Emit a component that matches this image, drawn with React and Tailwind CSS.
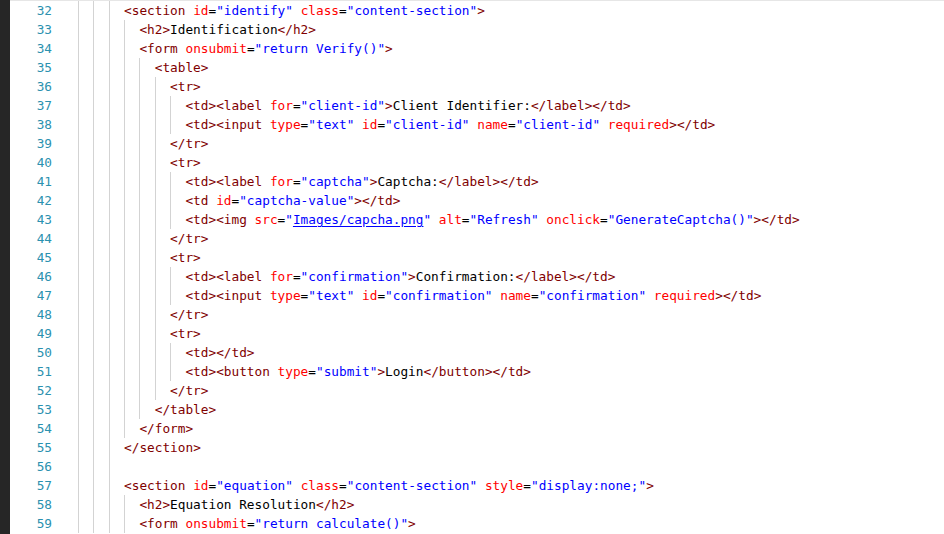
import React from 'react';

const lines = [
  [3, '<section id="identify" class="content-section">'],
  [4, '<h2>Identification</h2>'],
  [4, '<form onsubmit="return Verify()">'],
  [5, '<table>'],
  [6, '<tr>'],
  [7, '<td><label for="client-id">Client Identifier:</label></td>'],
  [7, '<td><input type="text" id="client-id" name="client-id" required></td>'],
  [6, '</tr>'],
  [6, '<tr>'],
  [7, '<td><label for="captcha">Captcha:</label></td>'],
  [7, '<td id="captcha-value"></td>'],
  [7, '<td><img src="Images/capcha.png" alt="Refresh" onclick="GenerateCaptcha()"></td>'],
  [6, '</tr>'],
  [6, '<tr>'],
  [7, '<td><label for="confirmation">Confirmation:</label></td>'],
  [7, '<td><input type="text" id="confirmation" name="confirmation" required></td>'],
  [6, '</tr>'],
  [6, '<tr>'],
  [7, '<td></td>'],
  [7, '<td><button type="submit">Login</button></td>'],
  [6, '</tr>'],
  [5, '</table>'],
  [4, '</form>'],
  [3, '</section>'],
  [3, ''],
  [3, '<section id="equation" class="content-section" style="display:none;">'],
  [4, '<h2>Equation Resolution</h2>'],
  [4, '<form onsubmit="return calculate()">'],
];

// tiny html tokenizer: tag (dark red), attr name (red), value (blue), text (black)
const tokenize = (src) => {
  const out = [];
  let i = 0;
  while (i < src.length) {
    if (src[i] === '<') {
      let j = i + 1;
      while (j < src.length && /[\/a-zA-Z0-9]/.test(src[j])) j++;
      out.push({ t: 'tag', v: src.slice(i, j) });
      i = j;
      while (i < src.length && src[i] !== '>') {
        if (src[i] === ' ' || src[i] === '=') {
          out.push({ t: 'text', v: src[i] });
          i++;
        } else if (src[i] === '"') {
          const k = src.indexOf('"', i + 1);
          out.push({ t: 'val', v: src.slice(i, k + 1) });
          i = k + 1;
        } else {
          let k = i;
          while (k < src.length && /[a-z\-]/.test(src[k])) k++;
          out.push({ t: 'attr', v: src.slice(i, k) });
          i = k;
        }
      }
      out.push({ t: 'tag', v: '>' });
      i++;
    } else {
      const k = src.indexOf('<', i);
      const end = k === -1 ? src.length : k;
      out.push({ t: 'text', v: src.slice(i, end) });
      i = end;
    }
  }
  return out;
};

const Token = ({ tok }) => {
  if (tok.t === 'tag') return <span className="text-[#800000]">{tok.v}</span>;
  if (tok.t === 'attr') return <span className="text-[#ff0000]">{tok.v}</span>;
  if (tok.t === 'val') {
    // file paths get the link underline
    if (tok.v === '"Images/capcha.png"') {
      return (
        <span className="text-[#0000ff]">
          "<span className="underline underline-offset-[2px]">Images/capcha.png</span>"
        </span>
      );
    }
    return <span className="text-[#0000ff]">{tok.v}</span>;
  }
  return <span className="text-black">{tok.v}</span>;
};

const CodeLine = ({ num, indent, src }) => (
  <div className="flex h-[19px] items-stretch">
    <div className="w-[68px] shrink-0 pr-[26px] text-right leading-[19px] text-[#2b91af]">{num}</div>
    <div className="flex items-stretch whitespace-pre leading-[19px]">
      {Array.from({ length: indent }).map((_, k) => (
        <span key={k} className="w-[2ch] shrink-0 border-l border-[#d3d3d3]" />
      ))}
      <span>
        {tokenize(src).map((tok, k) => (
          <Token key={k} tok={tok} />
        ))}
      </span>
    </div>
  </div>
);

const App = () => {
  return (
    <div
      className="flex h-[534px] w-[944px] overflow-hidden bg-white text-[12.75px]"
      style={{ fontFamily: '"DejaVu Sans Mono", "Liberation Mono", monospace' }}
    >
      <div className="w-[10px] shrink-0 bg-[#262626]" />
      <div className="flex-1 border-t border-[#e6e6e6]">
        {lines.map(([indent, src], i) => (
          <CodeLine key={i} num={32 + i} indent={indent} src={src} />
        ))}
      </div>
    </div>
  );
};

export default App;
